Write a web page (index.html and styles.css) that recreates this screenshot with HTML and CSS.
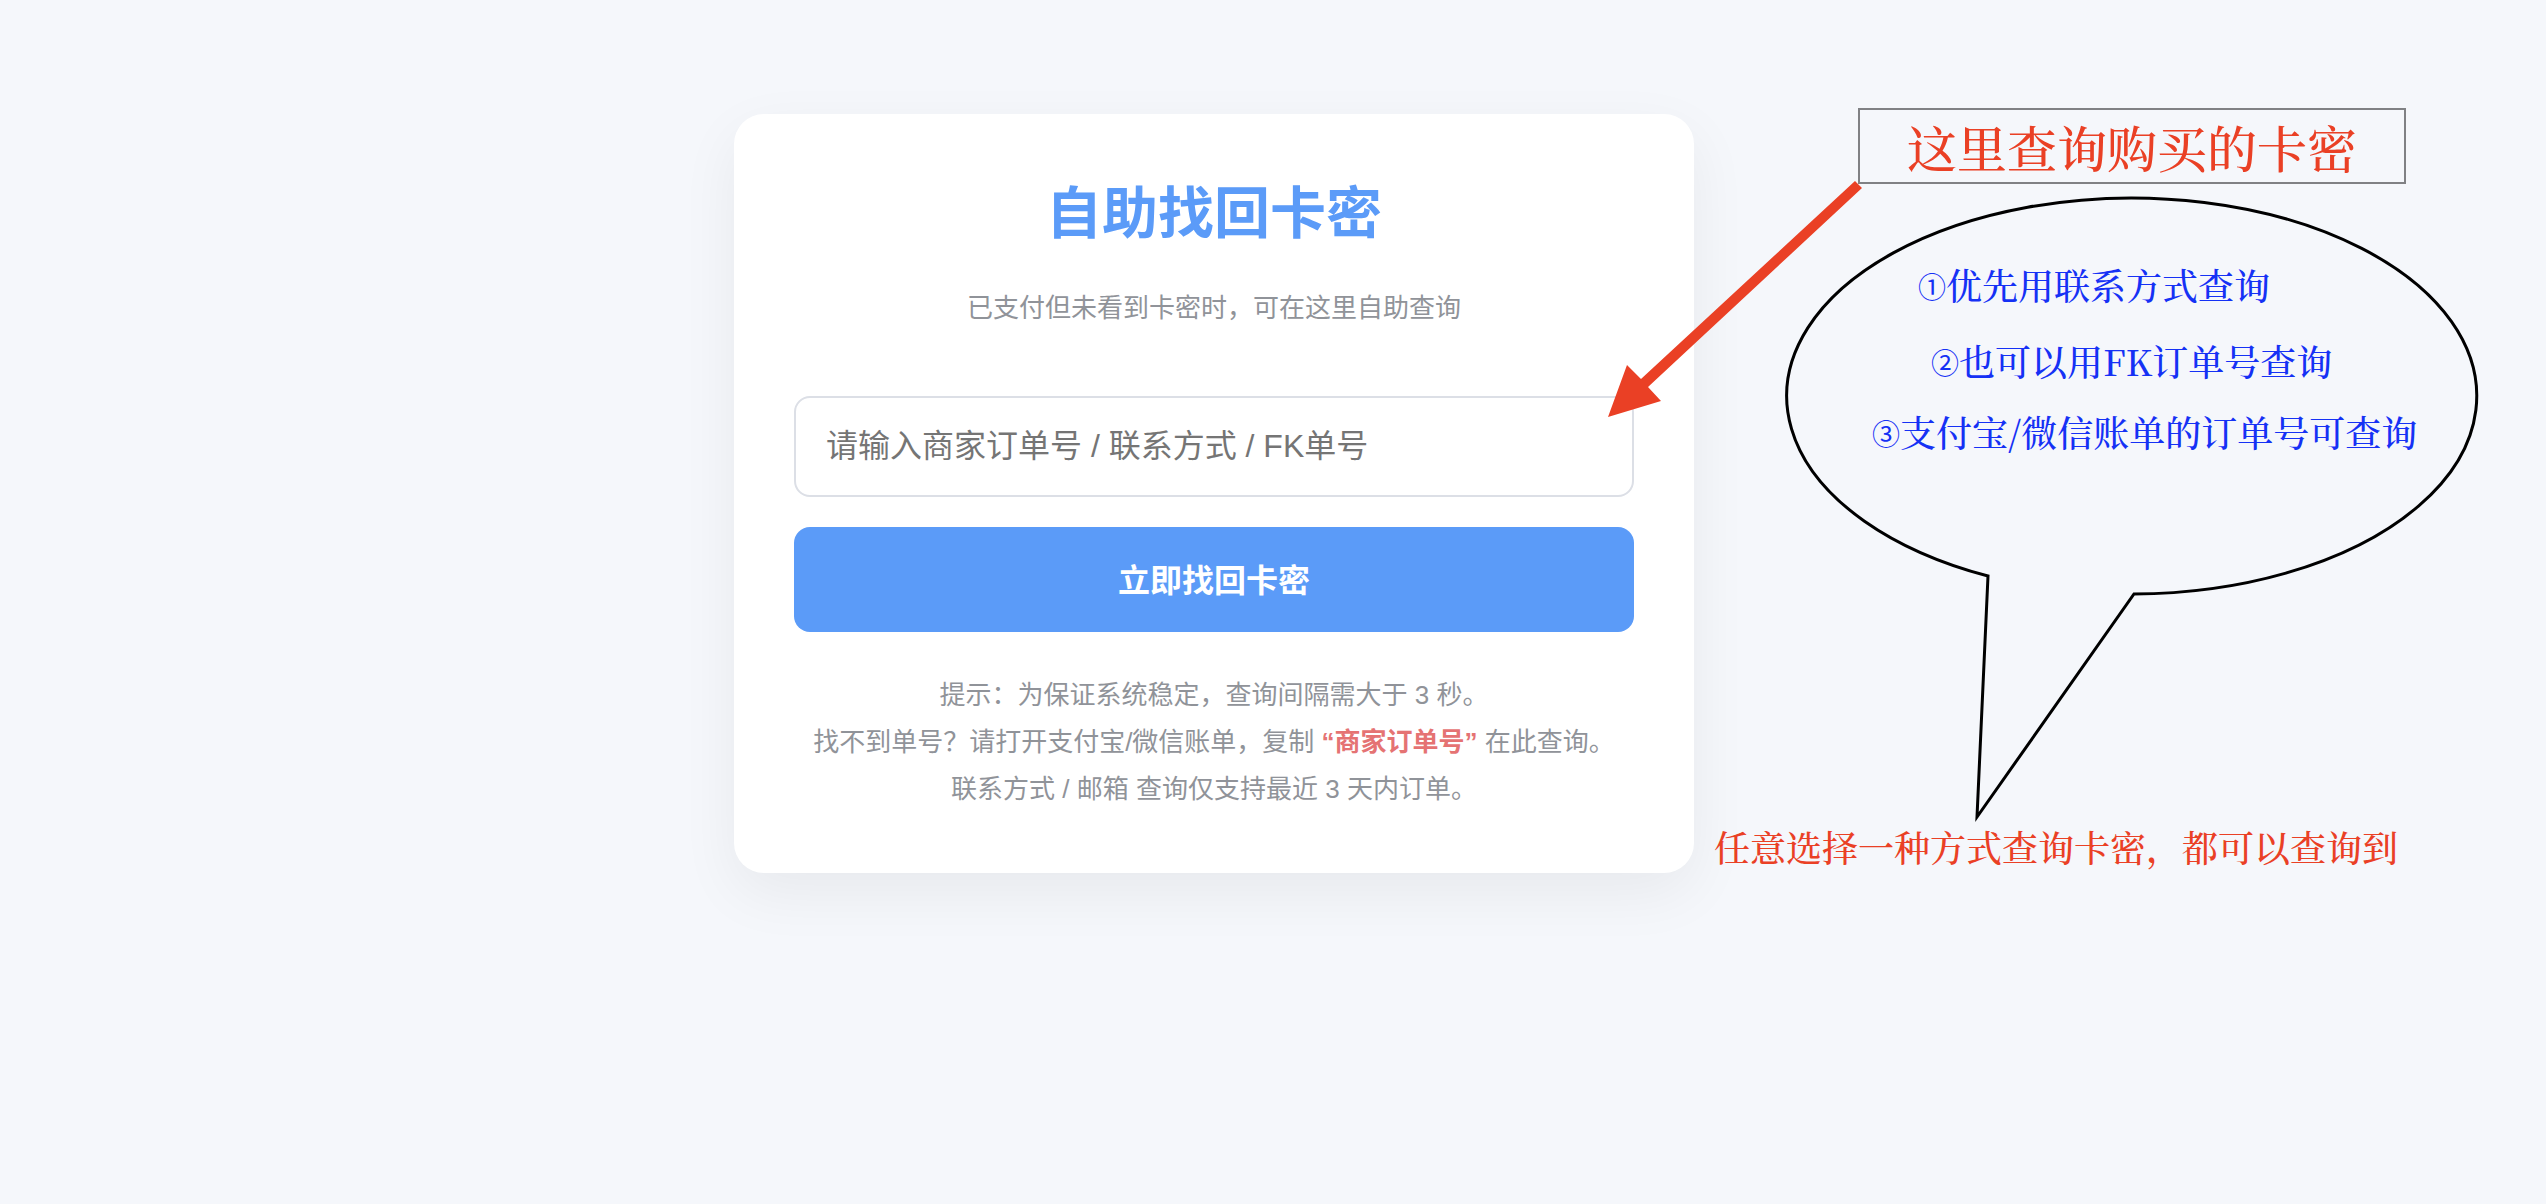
FILE: index.html
```html
<!DOCTYPE html>
<html lang="zh-CN">
<head>
<meta charset="utf-8">
<meta name="viewport" content="width=device-width, initial-scale=1">
<title>自助找回卡密</title>
<link rel="stylesheet" href="styles.css">
</head>
<body>
<main class="page">
  <div class="stage">
    <section class="card">
      <h1 class="title">自助找回卡密</h1>
      <p class="subtitle">已支付但未看到卡密时，可在这里自助查询</p>
      <form class="form">
        <input class="field" type="text" aria-label="订单号或联系方式" placeholder="请输入商家订单号 / 联系方式 / FK单号">
        <button class="submit" type="button">立即找回卡密</button>
      </form>
      <p class="hints">提示：为保证系统稳定，查询间隔需大于 3 秒。<br>找不到单号？请打开支付宝/微信账单，复制 <strong class="key">“商家订单号”</strong> 在此查询。<br>联系方式 / 邮箱 查询仅支持最近 3 天内订单。</p>
    </section>

    <aside class="notes">
      <svg class="bubble" width="700" height="640" viewBox="0 0 700 640" aria-hidden="true">
        <path d="M209 387A345 198 0 1 1 355 405L198 628Z" fill="none" stroke="#000" stroke-width="3" stroke-miterlimit="10"/>
      </svg>
      <p class="note label">这里查询购买的卡密</p>
      <p class="note step step-1"><span class="num">①</span>优先用联系方式查询</p>
      <p class="note step step-2"><span class="num">②</span>也可以用FK订单号查询</p>
      <p class="note step step-3"><span class="num">③</span>支付宝/微信账单的订单号可查询</p>
      <p class="note summary">任意选择一种方式查询卡密，都可以查询到</p>
      <svg class="arrow" width="270" height="250" viewBox="0 0 270 250" aria-hidden="true">
        <path d="M255 11L262 18L48 217L61 231L8 247L27 195L41 209Z" fill="#ea4025"/>
      </svg>
    </aside>
  </div>
</main>
</body>
</html>
```
FILE: styles.css
```css
* {
  box-sizing: border-box;
}

body {
  margin: 0;
  background: #f5f7fb;
  font-family: "Liberation Sans", "Noto Sans CJK SC", sans-serif;
  overflow-x: hidden;
}

h1,
p {
  margin: 0;
}

.page {
  display: flex;
  justify-content: center;
  min-height: 100vh;
  padding: 114px 118px 60px 0;
}

.stage {
  position: relative;
  align-self: flex-start;
  width: 100%;
  max-width: 960px;
}

.card {
  padding: 60px;
  background: #fff;
  border-radius: 30px;
  box-shadow: 0 20px 60px rgba(0, 0, 0, 0.06);
  text-align: center;
}

.title {
  color: #5b9bf8;
  font-size: 56px;
  line-height: 80px;
}

.subtitle {
  margin-top: 35px;
  color: #909399;
  font-size: 26px;
  line-height: 38px;
}

.form {
  display: flex;
  flex-direction: column;
  gap: 30px;
  margin-top: 69px;
}

.field {
  width: 100%;
  height: 101px;
  padding: 0 30px;
  border: 2px solid #dcdfe6;
  border-radius: 16px;
  background: #fff;
  font: inherit;
  font-size: 32px;
}

.field::placeholder {
  color: #757575;
}

.submit {
  width: 100%;
  height: 105px;
  padding: 0 0 4px;
  border: 0;
  border-radius: 16px;
  background: #5b9bf8;
  color: #fff;
  font: inherit;
  font-size: 32px;
  font-weight: 700;
}

.hints {
  margin-top: 40px;
  color: #909399;
  font-size: 26px;
  line-height: 47px;
}

.key {
  color: #e57373;
}

/* Hand-placed annotations to the right of the card */
.notes {
  position: absolute;
  top: 0;
  left: 100%;
  font-family: "Noto Serif CJK SC", "Songti SC", "Liberation Serif", "Noto Sans CJK SC", serif;
  font-weight: 500;
}

.note,
.bubble,
.arrow {
  position: absolute;
  white-space: nowrap;
}

.bubble {
  top: 75px;
  left: 85px;
}

.arrow {
  top: 56px;
  left: -94px;
}

.label {
  top: -6px;
  left: 164px;
  width: 548px;
  padding-left: 47px;
  border: 2px solid #808184;
  color: #ea4025;
  font-size: 50px;
  line-height: 72px;
}

.step {
  color: #1531f5;
  font-size: 36px;
  line-height: 48px;
}

.num {
  font-family: "Noto Sans CJK SC", sans-serif;
  font-size: 28px;
  font-weight: 400;
  line-height: 1;
  vertical-align: 2px;
}

.step-1 {
  top: 147px;
  left: 224px;
}

.step-2 {
  top: 223px;
  left: 237px;
}

.step-3 {
  top: 294px;
  left: 178px;
}

.summary {
  top: 709px;
  left: 20px;
  color: #ea4025;
  font-size: 36px;
  line-height: 48px;
}
```
